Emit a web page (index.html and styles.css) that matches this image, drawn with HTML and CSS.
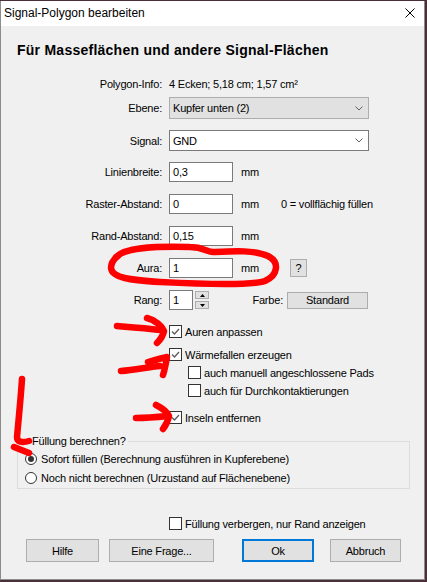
FILE: index.html
```html
<!doctype html>
<html lang="de">
	<head>
		<meta charset="UTF-8" />
		<title>Signal-Polygon bearbeiten</title>
		<link rel="stylesheet" href="styles.css">
	</head>
	<body>
		<div class="window">
			<div class="titlebar">
				<span class="title">Signal-Polygon bearbeiten</span>
				<svg class="close" width="10" height="10" viewBox="0 0 10 10">
					<path d="M0.5 0.5 L9.5 9.5 M9.5 0.5 L0.5 9.5" stroke="#000" stroke-width="1" />
				</svg>
			</div>

			<h1>Für Masseflächen und andere Signal-Flächen</h1>

			<div class="row info">
				<span class="label">Polygon-Info:</span>
				<span>4 Ecken; 5,18 cm; 1,57 cm²</span>
			</div>

			<div class="row r-ebene">
				<span class="label">Ebene:</span>
				<div class="select disabled">
					<span>Kupfer unten (2)</span>
					<svg width="8" height="5" viewBox="0 0 8 5"><polyline points="0.5,0.5 4,4 7.5,0.5" fill="none" stroke="#606060" /></svg>
				</div>
			</div>

			<div class="row r-signal">
				<span class="label">Signal:</span>
				<div class="select">
					<span>GND</span>
					<svg width="8" height="5" viewBox="0 0 8 5"><polyline points="0.5,0.5 4,4 7.5,0.5" fill="none" stroke="#606060" /></svg>
				</div>
			</div>

			<div class="row r-field">
				<span class="label">Linienbreite:</span>
				<span class="input">0,3</span>
				<span class="unit">mm</span>
			</div>

			<div class="row r-field">
				<span class="label">Raster-Abstand:</span>
				<span class="input">0</span>
				<span class="unit">mm</span>
				<span class="extra">0 = vollflächig füllen</span>
			</div>

			<div class="row r-field">
				<span class="label">Rand-Abstand:</span>
				<span class="input">0,15</span>
				<span class="unit">mm</span>
			</div>

			<div class="row r-field">
				<span class="label">Aura:</span>
				<span class="input">1</span>
				<span class="unit">mm</span>
				<span class="btn help">?</span>
			</div>

			<div class="row r-field">
				<span class="label">Rang:</span>
				<span class="input small">1</span>
				<span class="spin">
					<span class="spin-btn"><svg width="5" height="3" viewBox="0 0 5 3"><polygon points="0,3 2.5,0 5,3" fill="#000" /></svg></span>
					<span class="spin-btn"><svg width="5" height="3" viewBox="0 0 5 3"><polygon points="0,0 2.5,3 5,0" fill="#000" /></svg></span>
				</span>
				<span class="farbe">Farbe:</span>
				<span class="btn standard">Standard</span>
			</div>

			<div class="check-row c-auren">
				<span class="box"><svg width="11" height="11" viewBox="0 0 11 11"><polyline points="2,5.5 4.5,8 9,3" fill="none" stroke="#5f5f5f" stroke-width="1.4" /></svg></span>
				<span>Auren anpassen</span>
			</div>
			<div class="check-row c-waerme">
				<span class="box"><svg width="11" height="11" viewBox="0 0 11 11"><polyline points="2,5.5 4.5,8 9,3" fill="none" stroke="#5f5f5f" stroke-width="1.4" /></svg></span>
				<span>Wärmefallen erzeugen</span>
			</div>
			<div class="check-row sub c-manuell">
				<span class="box"></span>
				<span>auch manuell angeschlossene Pads</span>
			</div>
			<div class="check-row sub c-durch">
				<span class="box"></span>
				<span>auch für Durchkontaktierungen</span>
			</div>
			<div class="check-row c-inseln">
				<span class="box"><svg width="11" height="11" viewBox="0 0 11 11"><polyline points="2,5.5 4.5,8 9,3" fill="none" stroke="#5f5f5f" stroke-width="1.4" /></svg></span>
				<span>Inseln entfernen</span>
			</div>

			<fieldset class="group">
				<legend>Füllung berechnen?</legend>
				<div class="radio-row">
					<span class="radio checked"></span>
					<span>Sofort füllen (Berechnung ausführen in Kupferebene)</span>
				</div>
				<div class="radio-row second">
					<span class="radio"></span>
					<span>Noch nicht berechnen (Urzustand auf Flächenebene)</span>
				</div>
			</fieldset>

			<div class="check-row c-hide">
				<span class="box"></span>
				<span>Füllung verbergen, nur Rand anzeigen</span>
			</div>

			<div class="buttons">
				<span class="btn b-hilfe">Hilfe</span>
				<span class="btn b-frage">Eine Frage...</span>
				<span class="btn b-ok">Ok</span>
				<span class="btn b-abbruch">Abbruch</span>
			</div>
		</div>

		<!-- red marker strokes drawn over the dialog -->
		<svg class="marks" width="427" height="582" viewBox="0 0 427 582">
			<g fill="none" stroke="#ff0000" stroke-width="6.5" stroke-linecap="round" stroke-linejoin="round">
				<path d="M116 257 C125 248 150 246 190 247 C205 247 207 253 215 252 C235 251 255 250 268 256 C280 262 278 275 265 281 C250 286 200 284 160 282 C130 280 112 278 111 268 C111 262 114 259 118 256" />
				<path d="M117 326 C130 327 145 328 160 330" />
				<path d="M147 318 C155 320 162 326 164 331 C163 336 160 340 157 343" />
				<path d="M121 371 C135 370 148 367 160 366" />
				<path d="M148 362 C155 360 162 358 167 357 C166 363 165 369 163 375" />
				<path d="M136 418 C148 418 158 417 168 416" />
				<path d="M156 405 C162 408 167 412 169 416 C168 421 166 425 163 429" />
				<path d="M22 379 C21 395 19 415 17 437 C17 442 22 443 29 441" />
				<path d="M14 447 C19 449 24 451 29 453" />
			</g>
		</svg>
	</body>
</html>
```

FILE: styles.css
```css
body {
	margin: 0;
	background-color: #4a3038;
	font-family: "Liberation Sans", Arial, sans-serif;
	font-size: 11px;
	letter-spacing: -0.2px;
	color: #000;
}
.window {
	width: 423px;
	height: 578px;
	margin-top: 1px;
	border: 1px solid #8c8c8c;
	border-top: none;
	background-color: #f0f0f0;
	overflow: hidden;
}
.titlebar {
	height: 25px;
	background-color: #fff;
	display: flex;
	align-items: center;
	justify-content: space-between;
	padding: 0 9px 0 3px;
}
.title {
	font-size: 12px;
	letter-spacing: 0;
	margin-top: -1px;
}
.close {
	margin-top: -1px;
}
h1 {
	margin: 16px 0 0 16px;
	font-size: 14px;
	line-height: 16px;
	letter-spacing: 0.25px;
	font-weight: bold;
}
.row {
	display: flex;
	align-items: center;
}
.label {
	width: 161px;
	margin-right: 7px;
	text-align: right;
	flex-shrink: 0;
}
.info {
	margin-top: 19px;
	line-height: 14px;
}
.r-ebene {
	margin-top: 6px;
}
.r-signal {
	margin-top: 11px;
}
.r-field {
	margin-top: 11px;
}
.r-field + .r-field {
	margin-top: 12px;
}
.select {
	width: 200px;
	height: 21px;
	box-sizing: border-box;
	border: 1px solid #7a7a7a;
	background-color: #fff;
	display: flex;
	align-items: center;
	justify-content: space-between;
	padding: 0 5px 0 3px;
}
.select.disabled {
	height: 22px;
	border-color: #adadad;
	background-color: #e1e1e1;
}
.input {
	width: 64px;
	height: 20px;
	box-sizing: border-box;
	border: 1px solid #7a7a7a;
	background-color: #fff;
	padding-left: 3px;
	line-height: 18px;
}
.input.small {
	width: 24px;
}
.unit {
	margin-left: 8px;
	width: 32px;
}
.extra {
	margin-left: 8px;
}
.btn {
	box-sizing: border-box;
	border: 1px solid #adadad;
	background-color: #e1e1e1;
	display: flex;
	align-items: center;
	justify-content: center;
}
.help {
	width: 17px;
	height: 18px;
	margin-left: 17px;
}
.spin {
	display: flex;
	flex-direction: column;
	gap: 2px;
	margin-left: 2px;
}
.spin-btn {
	width: 14px;
	height: 8px;
	box-sizing: border-box;
	border: 1px solid #adadad;
	background-color: #e1e1e1;
	display: flex;
	align-items: center;
	justify-content: center;
}
.farbe {
	width: 74px;
	text-align: right;
}
.standard {
	width: 81px;
	height: 17px;
	margin-left: 4px;
}
.check-row {
	display: flex;
	align-items: center;
	height: 13px;
	margin-left: 168px;
}
.sub {
	margin-left: 187px;
	margin-top: 5px;
}
.box {
	width: 13px;
	height: 13px;
	box-sizing: border-box;
	border: 1px solid #333;
	background-color: #fff;
	margin-right: 3px;
	display: flex;
	align-items: center;
	justify-content: center;
}
.c-auren {
	margin-top: 15px;
}
.c-waerme {
	margin-top: 10px;
}
.c-inseln {
	margin-top: 14px;
}
.group {
	margin: 10px 14px 0 16px;
	padding: 4px 0 3px 7px;
	border: 1px solid #dcdcdc;
}
.group legend {
	margin-left: 5px;
	padding: 0 2px;
	line-height: 14px;
}
.radio-row {
	display: flex;
	align-items: center;
	height: 14px;
}
.radio-row.second {
	margin-top: 5px;
}
.radio {
	width: 12px;
	height: 12px;
	box-sizing: border-box;
	border: 1px solid #333;
	border-radius: 50%;
	background-color: #fff;
	margin-right: 4px;
	display: flex;
	align-items: center;
	justify-content: center;
}
.radio.checked::after {
	content: "";
	width: 6px;
	height: 6px;
	border-radius: 50%;
	background-color: #333;
}
.c-hide {
	margin-top: 28px;
}
.buttons {
	display: flex;
	margin-top: 9px;
}
.buttons .btn {
	height: 23px;
}
.b-hilfe {
	margin-left: 25px;
	width: 73px;
}
.b-frage {
	margin-left: 10px;
	width: 105px;
}
.b-ok {
	margin-left: 28px;
	width: 72px;
	border: 2px solid #0078d7;
}
.b-abbruch {
	margin-left: 16px;
	width: 71px;
}
.marks {
	position: absolute;
	top: 0;
	left: 0;
	pointer-events: none;
}
```
